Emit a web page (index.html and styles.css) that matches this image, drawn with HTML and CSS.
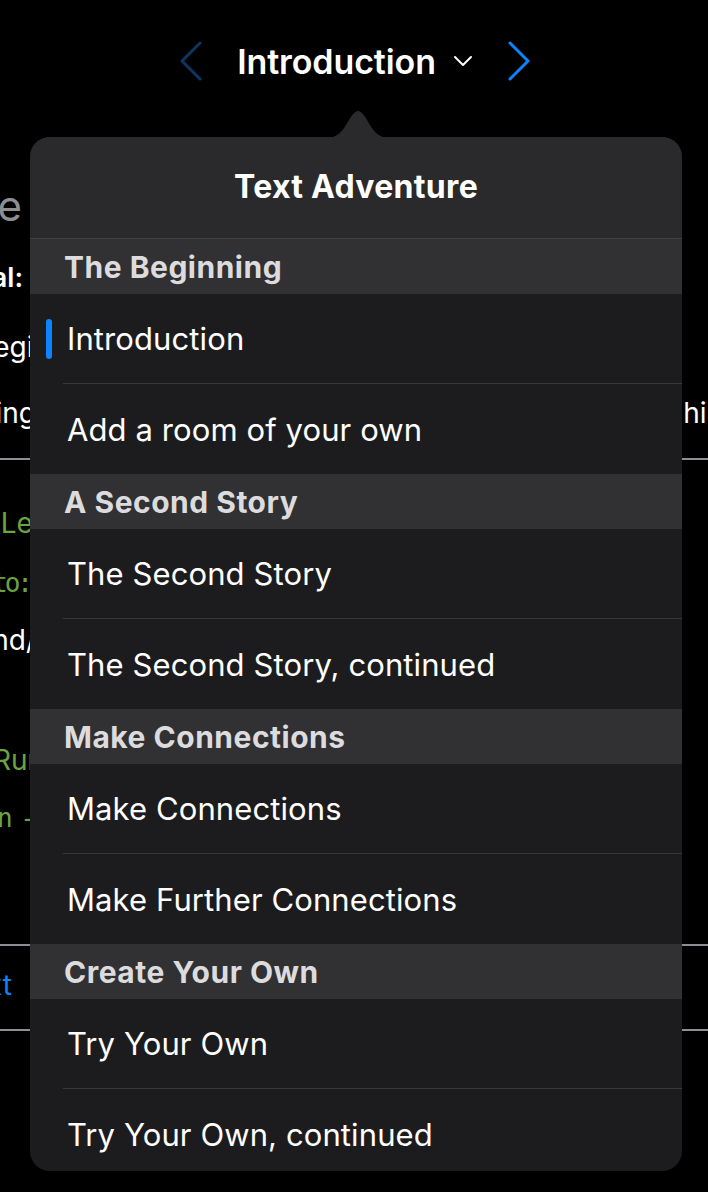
FILE: index.html
```html
<!DOCTYPE html>
<html lang="en">
<head>
    <meta charset="UTF-8">
    <meta name="viewport" content="width=device-width, initial-scale=1.0">
    <title>Text Adventure</title>
    <link rel="stylesheet" href="styles.css">
</head>
<body>

    <div class="nav">
        <svg class="chev chev-prev" width="24" height="40" viewBox="0 0 24 40"><path d="M21 2 L3 20 L21 38"/></svg>
        <div class="nav-title">
            <span>Introduction</span>
            <svg class="chev-down" width="20" height="12" viewBox="0 0 20 12"><path d="M2 2 L10 10 L18 2"/></svg>
        </div>
        <svg class="chev chev-next" width="24" height="40" viewBox="0 0 24 40"><path d="M3 2 L21 20 L3 38"/></svg>
    </div>

    <!-- page content behind the popover -->
    <div class="backdrop">
        <div class="bg-row r1"><div class="frag-l"><span class="bg-title">Welcome to the Adventure Here</span></div></div>
        <div class="bg-row r2"><div class="frag-l"><span class="bg-bold">Goal:</span></div></div>
        <div class="bg-row r3"><div class="frag-l"><span class="cut">Begin</span></div></div>
        <div class="bg-row r4">
            <div class="frag-l"><span class="cut2">Beginning</span></div>
            <div class="frag-r"><span class="cut-r">third</span></div>
        </div>
        <div class="bg-line l1"></div>
        <div class="bg-row r5"><div class="frag-l"><span class="green cut3">Let</span></div></div>
        <div class="bg-row r6"><div class="frag-l"><span class="green mono cut7">to:</span></div></div>
        <div class="bg-row r7"><div class="frag-l"><span class="cut4">and/</span></div></div>
        <div class="bg-row r8"><div class="frag-l"><span class="green cut5">Run</span></div></div>
        <div class="bg-row r9"><div class="frag-l"><span class="green mono cut6">n -</span></div></div>
        <div class="bg-line l2"></div>
        <div class="bg-row r10"><div class="frag-l"><span class="blue">Next</span></div></div>
        <div class="bg-line l3"></div>
    </div>

    <div class="popover">
        <svg class="arrow" width="70" height="28" viewBox="0 0 70 28"><path d="M0 28 C14 28 18 24 26 10 C30 3 33 1 35 1 C37 1 40 3 44 10 C52 24 56 28 70 28 Z"/></svg>
        <div class="pop-body">
            <div class="pop-header">Text Adventure</div>

            <div class="section">The Beginning</div>
            <div class="item current"><span class="marker"></span>Introduction</div>
            <div class="item last">Add a room of your own</div>

            <div class="section">A Second Story</div>
            <div class="item">The Second Story</div>
            <div class="item last">The Second Story, continued</div>

            <div class="section">Make Connections</div>
            <div class="item">Make Connections</div>
            <div class="item last">Make Further Connections</div>

            <div class="section">Create Your Own</div>
            <div class="item">Try Your Own</div>
            <div class="item last">Try Your Own, continued</div>
        </div>
    </div>

</body>
</html>
```
FILE: styles.css
```css
* {
    margin: 0;
    padding: 0;
    box-sizing: border-box;
    font-family: Inter, "Noto Sans", sans-serif;
}

body {
    background: #000;
    color: white;
    width: 708px;
    height: 1192px;
    overflow: hidden;
    position: relative;
}

/* top navigation */

.nav {
    height: 122px;
    display: flex;
    justify-content: center;
    align-items: center;
    gap: 34px;
    padding-left: 2px;
}

.chev path,
.chev-down path {
    fill: none;
    stroke-linecap: round;
    stroke-linejoin: round;
}

.chev path {
    stroke-width: 3;
}

.chev-prev path {
    stroke: #0c3764;
}

.chev-next path {
    stroke: #0a84ff;
}

.nav-title {
    display: flex;
    align-items: center;
    gap: 17px;
    font-size: 34px;
    font-weight: 600;
    letter-spacing: -0.1px;
}

.chev-down path {
    stroke: #fff;
    stroke-width: 2;
}

/* backdrop page */

.backdrop {
    padding-top: 47px;
}

.bg-row {
    display: flex;
    align-items: center;
    font-size: 28px;
    white-space: nowrap;
}

.frag-l {
    width: 30px;
    overflow: hidden;
    display: flex;
    justify-content: flex-end;
}

.frag-r {
    margin-left: auto;
    width: 25px;
    overflow: hidden;
}

.r1 { height: 72px; }
.r2 { height: 72px; }
.r3 { height: 68px; }
.r4 { height: 64px; }
.r5 { height: 60px; margin-top: 33px; }
.r6 { height: 60px; }
.r7 { height: 54px; }
.r8 { height: 60px; margin-top: 63px; }
.r9 { height: 56px; }
.r10 { height: 78px; }

.bg-title {
    font-size: 42px;
    color: #8e8e93;
    margin-right: 8px;
}

.bg-bold {
    font-weight: 600;
    font-size: 27px;
    margin-right: 7px;
}

.cut { margin-right: -20px; }
.cut2 { margin-right: -6px; }
.cut3 { margin-right: -12px; }
.cut4 { margin-right: -6px; }
.cut5 { margin-right: -14px; }
.cut6 { margin-right: -2px; letter-spacing: -4px; }
.cut7 { margin-right: 0; letter-spacing: -3px; }
.cut-r { margin-left: -9px; display: inline-block; }

.green {
    color: #6ba33f;
}

.mono {
    font-family: "DejaVu Sans Mono", monospace;
    font-size: 26px;
}

.blue {
    color: #0a84ff;
    margin-right: 18px;
}

.bg-line {
    height: 2px;
    background: #8e8e93;
}

.l1 { margin-top: 13px; }
.l2 { margin-top: 98px; }
.l3 { margin-top: 5px; }

/* popover */

.popover {
    position: absolute;
    top: 110px;
    left: 30px;
    width: 652px;
}

.arrow {
    display: block;
    margin-left: 293px;
    margin-bottom: -1px;
}

.arrow path {
    fill: #2a2a2c;
}

.pop-body {
    height: 1034px;
    border-radius: 20px;
    overflow: hidden;
    background: #1c1c1e;
}

.pop-header {
    height: 102px;
    background: #2a2a2c;
    border-bottom: 1px solid #404042;
    display: flex;
    align-items: center;
    justify-content: center;
    font-size: 32px;
    font-weight: 700;
    letter-spacing: 0.3px;
    padding-bottom: 2px;
}

.section {
    height: 55px;
    background: #313133;
    display: flex;
    align-items: center;
    padding-left: 34px;
    font-size: 30px;
    font-weight: 700;
    letter-spacing: 0.5px;
    color: #dcdcdf;
}

.item {
    height: 90px;
    margin-left: 33px;
    padding-left: 4px;
    display: flex;
    align-items: center;
    font-size: 31px;
    letter-spacing: 0.1px;
    border-bottom: 1px solid #38383a;
    position: relative;
}

.item.last {
    border-bottom: none;
}

.marker {
    position: absolute;
    left: -17px;
    top: 25px;
    width: 6px;
    height: 40px;
    border-radius: 3px;
    background: #0a84ff;
}
```
